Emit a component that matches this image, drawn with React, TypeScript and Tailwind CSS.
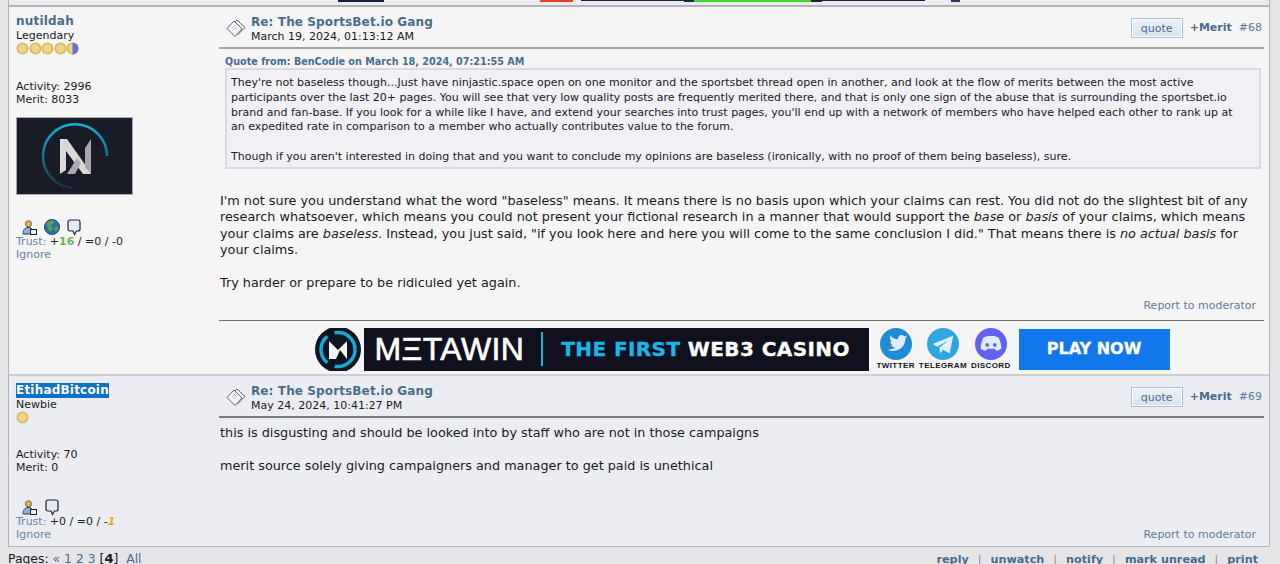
const font = "font-['DejaVu_Sans','Liberation_Sans',sans-serif]";

function Coin({ half }: { half?: boolean }) {
  return (
    <svg width="13" height="13" viewBox="0 0 13 13" className="-mr-[0.5px]">
      <circle cx="6.500" cy="6.500" r="6" fill="#d9b962" />
      <circle cx="6.500" cy="6.500" r="4.200" fill="#f0d688" />
      {half && <path d="M6.500.5a6 6 0 0 1 0 12z" fill="#6a6fd0" />}
    </svg>
  );
}

function PersonIcon() {
  return (
    <svg width="15" height="15" viewBox="0 0 15 15">
      <circle cx="6.500" cy="3.800" r="3" fill="#e8b93c" stroke="#444" strokeWidth=".8" />
      <path d="M1 14c0-4 2-6.500 5-6.500s4 1 5 3v3.500z" fill="#8fb0d8" stroke="#2c3e5c" strokeWidth="1" />
      <rect x="8.500" y="9.500" width="6" height="5" fill="#eee" stroke="#222" strokeWidth="1" />
    </svg>
  );
}

function GlobeIcon() {
  return (
    <svg width="16" height="16" viewBox="0 0 16 16">
      <circle cx="8" cy="8" r="7.600" fill="#2a6da8" stroke="#173d5e" strokeWidth=".8" />
      <path d="M3 4c2-2 5-3 7-2 1 1-1 3-2 3s-1 2 0 3 1 3-1 4-3-2-3-3-2-2-1-5zM11 8l3-1c1 3-1 5-2 6-1-1-2-3-1-5z" fill="#5aa34a" />
    </svg>
  );
}

function BubbleIcon() {
  return (
    <svg width="14" height="17" viewBox="0 0 14 17">
      <path d="M3 1h8a2 2 0 0 1 2 2v7a2 2 0 0 1-2 2H9.500L7.500 15.500 6 12H3a2 2 0 0 1-2-2V3a2 2 0 0 1 2-2z" fill="#e4ebf5" stroke="#1d2430" strokeWidth="1.200" />
    </svg>
  );
}

function TopicIcon() {
  return (
    <svg width="20" height="19" viewBox="0 0 20 19" fill="#f4f5f8" stroke="#62656c" strokeWidth="1" className="shrink-0">
      <path d="M11 1l8 7.500-7 7-8-7.500z" />
      <path d="M8 2l8 8-7 7.500-8-8z" />
      <path d="M6 9l3-3M7.500 11l3-3" stroke="#aeb2ba" />
    </svg>
  );
}

function QuoteButton() {
  return (
    <span className="flex h-[20px] w-[52px] items-center justify-center border border-[#a9c0dc] bg-gradient-to-b from-[#f0f3f8] to-[#d9e1ec] text-[11px] leading-none text-[#476c8e] shadow-[inset_0_0_0_1px_#fff]">
      quote
    </span>
  );
}

function Sidebar({ name, rank, coins, half, activity, merit, selected, icons, trust, avatar }: {
  name: string; rank: string; coins: number; half?: boolean; activity: number; merit: number;
  selected?: boolean; icons: React.ReactNode; trust: React.ReactNode; avatar?: boolean;
}) {
  return (
    <div className="flex w-[210px] shrink-0 flex-col pl-[7px] pt-[7px] text-[11px] leading-[13px] text-[#1a1a22]">
      <b className={`self-start text-[12px] leading-[15px] tracking-[0.2px] ${selected ? "bg-[#0f70c8] text-white" : "text-[#476c8e]"}`}>{name}</b>
      <span>{rank}</span>
      <div className="flex h-[13px]">
        {Array.from({ length: coins }).map((_, i) => <Coin key={i} />)}
        {half && <Coin half />}
      </div>
      <div className={selected ? "mt-[24px]" : "mt-[25px]"}>Activity: {activity}</div>
      <div>Merit: {merit}</div>
      {avatar && (
        <div className="mt-[11px] flex h-[78px] w-[117px] items-center justify-center border border-[#a8a8ae] bg-[#191c27]">
          <svg width="72" height="72" viewBox="0 0 72 72">
            <defs>
              <linearGradient id="ring" x1="0" y1="0" x2="0" y2="1">
                <stop offset="0" stopColor="#14b4dc" />
                <stop offset="1" stopColor="#14b4dc" stopOpacity=".15" />
              </linearGradient>
            </defs>
            <path d="M68 36A32 32 0 1 0 33 68" fill="none" stroke="url(#ring)" strokeWidth="2.500" />
            <path d="M21 19h7l17 24 7 11h-8L27 31v19l-6 4z" fill="#d9d9db" />
            <path d="M52 19v35l-6-7V28zM28 54l10-16 4 5-6 11z" fill="#a9a9ad" />
          </svg>
        </div>
      )}
      <div className={`${avatar ? "mt-[24px]" : "mt-[25px]"} flex h-[16px] items-center pl-[6px] ${avatar ? "gap-[7px]" : "gap-[8px]"}`}>{icons}</div>
      <div><span className="text-[#6a84a6]">Trust: </span>{trust}</div>
      <div className="text-[#6a84a6]">Ignore</div>
    </div>
  );
}

function PostHead({ date, no, dark }: { date: string; no: number; dark?: boolean }) {
  return (
    <div className={`flex h-[42px] items-center border-b-2 pl-[7px] pt-[2px] ${dark ? "border-[#7c7c80]" : "border-[#a2a2a4]"}`}>
      <TopicIcon />
      <div className="ml-[5px] flex-1 pt-[1px]">
        <div className="text-[12px] font-bold leading-[15px] tracking-[0.12px] text-[#476c8e]">Re: The SportsBet.io Gang</div>
        <div className="text-[11px] leading-[13px] text-[#1a1a22]">{date}</div>
      </div>
      <div className="flex items-center gap-[7px] pr-[2px] text-[11px]">
        <QuoteButton />
        <b className="text-[#476c8e]">+Merit</b>
        <span className="text-[#5d7c9c]">#{no}</span>
      </div>
    </div>
  );
}

function Social({ color, label, shape }: { color: string; label: string; shape: string }) {
  return (
    <div className="flex flex-col items-center">
      <svg width="32" height="32" viewBox="0 0 34 34">
        <circle cx="17" cy="17" r="17" fill={color} />
        <path d={shape} fill="#dfeefa" />
      </svg>
      <span className="mt-[1px] whitespace-nowrap font-['Liberation_Sans',sans-serif] text-[8px] font-bold leading-[10px] tracking-[0.4px] text-[#15151f]">{label}</span>
    </div>
  );
}

function Banner() {
  return (
    <div className="flex h-[43px] items-center justify-center">
      <svg width="48" height="43" viewBox="0 0 48 43" className="mr-[2px]">
        <circle cx="24" cy="21.500" r="23" fill="#101522" />
        <circle cx="24" cy="21.500" r="17" fill="none" stroke="#15a9d8" strokeWidth="3.500" strokeDasharray="30 8" />
        <path d="M15 31V13l9 9 9-9v18l-7-9-4 9z" fill="#f4f4f4" />
      </svg>
      <div className="flex h-[43px] w-[505px] items-center whitespace-nowrap bg-[#10101f] pl-[11px] text-white">
        <span className="font-['Liberation_Sans',sans-serif] text-[32px] leading-none tracking-[0.4px] [-webkit-text-stroke:0.6px_white]">MΞTAWIN</span>
        <span className="ml-[17px] h-[34px] w-[2px] bg-[#15b5e0]" />
        <span className="ml-[18px] text-[20px] font-bold leading-none tracking-[0.4px] [-webkit-text-stroke:0.3px]">
          <span className="text-[#16b8ea]">THE FIRST</span> WEB3 CASINO
        </span>
      </div>
      <div className="flex h-[43px] w-[150px] items-start gap-[4px] pl-[8px]">
        <Social color="#1f8bd6" label="TWITTER" shape="M8 23c9 4 19-1 19-12l2-3-3 1c-2-3-7-2-7 3-4 0-6-2-8-4-1 3 0 5 2 7l-2-1c0 2 1 4 3 4h-2c1 2 2 2 4 3-2 1-4 2-8 2z" />
        <Social color="#2ea6e4" label="TELEGRAM" shape="M6 17L28 8l-4 19-7-4-3 4-1-6 10-8-12 7z" />
        <Social color="#6163f0" label="DISCORD" shape="M9 10c5-2 11-2 16 0 2 4 3 8 3 12-3 2-5 2-6 2l-1-2H13l-1 2c-1 0-3 0-6-2 0-4 1-8 3-12zm4 6a2 2 0 1 0 0 4 2 2 0 0 0 0-4zm8 0a2 2 0 1 0 0 4 2 2 0 0 0 0-4z" />
      </div>
      <div className="flex h-[41px] w-[151px] items-center justify-center bg-[#1277ea] text-[16px] font-bold text-white [-webkit-text-stroke:0.3px_white]">
        PLAY NOW
      </div>
    </div>
  );
}

export default function App() {
  return (
    <div className={`${font} h-[564px] w-[1280px] overflow-hidden bg-[#e5e5e8]`}>
      <div className="mx-[8px] w-[1262px] border-x border-b border-[#b4b4b6]">
        {/* bottom edge of the previous banner */}
        <div className="flex h-[7px] items-start border-b-2 border-[#b4b4b6] bg-[#ebecf1]">
          <span className="ml-[329px] h-[2px] w-[46px] bg-[#182238]" />
          <span className="ml-[156px] h-[2px] w-[33px] bg-[#e5421f]" />
          <span className="ml-[8px] h-[1px] w-[103px] bg-[#182238]" />
          <span className="h-[2px] w-[10px] bg-[#182238]" />
          <span className="h-[2px] w-[117px] bg-[#3cd52e]" />
          <span className="h-[2px] w-[11px] bg-[#182238]" />
          <span className="h-[1px] w-[103px] bg-[#182238]" />
          <span className="ml-[26px] h-[2px] w-[9px] bg-[#31365a]" />
        </div>

        <div className="flex h-[367px] bg-[#f5f5f6]">
          <Sidebar
            name="nutildah" rank="Legendary" coins={4} half activity={2996} merit={8033} avatar
            icons={<><PersonIcon /><GlobeIcon /><BubbleIcon /></>}
            trust={<>+<b className="text-[#6cb457]">16</b> / =0 / -0</>}
          />
          <div className="min-w-0 flex-1 pr-[5px]">
            <PostHead date="March 19, 2024, 01:13:12 AM" no={68} />
            <div className="pl-[6px] pt-[6px]">
              <div className="text-[9.650px] font-bold leading-[13px] text-[#476c8e]">Quote from: BenCodie on March 18, 2024, 07:21:55 AM</div>
              <div className="mr-[3px] border-2 border-[#d9dae8] bg-[#f0f0f5] pb-[2px] pl-[4px] pr-[12px] pt-[6px] text-[11px] leading-[14.800px] text-[#1a1a22]">
                They're not baseless though...Just have ninjastic.space open on one monitor and the sportsbet thread open in another, and look at the flow of merits between the most active participants over the last 20+ pages. You will see that very low quality posts are frequently merited there, and that is only one sign of the abuse that is surrounding the sportsbet.io brand and fan-base. If you look for a while like I have, and extend your searches into trust pages, you'll end up with a network of members who have helped each other to rank up at an expedited rate in comparison to a member who actually contributes value to the forum.
                <br /><br />
                Though if you aren't interested in doing that and you want to conclude my opinions are baseless (ironically, with no proof of them being baseless), sure.
              </div>
            </div>
            <div className="pl-[1px] pt-[24px] text-[12.800px] leading-[16.500px] text-[#1a1a22]">
              I'm not sure you understand what the word "baseless" means. It means there is no basis upon which your claims can rest. You did not do the slightest bit of any research whatsoever, which means you could not present your fictional research in a manner that would support the <i>base</i> or <i>basis</i> of your claims, which means your claims are <i>baseless</i>. Instead, you just said, "if you look here and here you will come to the same conclusion I did." That means there is <i>no actual basis</i> for your claims.
              <br /><br />
              Try harder or prepare to be ridiculed yet again.
            </div>
            <div className="flex justify-end pr-[8px] pt-[7px] text-[11px] leading-[13px] text-[#5d7c9c]">Report to moderator</div>
            <div className="mt-[8px] border-t border-[#6f6f72] pt-[7px]">
              <Banner />
            </div>
          </div>
        </div>

        <div className="flex h-[172px] border-t-2 border-[#cfcfd2] bg-[#ecedf2]">
          <Sidebar
            name="EtihadBitcoin" rank="Newbie" coins={1} activity={70} merit={0} selected
            icons={<><PersonIcon /><BubbleIcon /></>}
            trust={<>+0 / =0 / -<b className="italic text-[#f5a210]">1</b></>}
          />
          <div className="flex min-w-0 flex-1 flex-col pr-[5px]">
            <PostHead date="May 24, 2024, 10:41:27 PM" no={69} dark />
            <div className="pl-[1px] pt-[7px] text-[12.800px] leading-[16.500px] text-[#1a1a22]">
              this is disgusting and should be looked into by staff who are not in those campaigns
              <br /><br />
              merit source solely giving campaigners and manager to get paid is unethical
            </div>
            <div className="mt-auto flex justify-end pb-[5px] pr-[8px] text-[11px] leading-[13px] text-[#5d7c9c]">Report to moderator</div>
          </div>
        </div>
      </div>

      <div className="mx-[8px] flex w-[1262px] items-baseline justify-between pt-[5px] text-[12.400px] leading-[14px] text-[#1a1a22]">
        <div>
          Pages: <span className="text-[#476c8e]">« 1 2 3</span> [<b className="text-[13px]">4</b>]&nbsp; <span className="text-[#476c8e]">All</span>
        </div>
        <div className="flex gap-[9px] pr-[12px] text-[11.200px] font-bold text-[#476c8e]">
          <span>reply</span><span className="font-normal text-[#8a8a8e]">|</span>
          <span>unwatch</span><span className="font-normal text-[#8a8a8e]">|</span>
          <span>notify</span><span className="font-normal text-[#8a8a8e]">|</span>
          <span>mark unread</span><span className="font-normal text-[#8a8a8e]">|</span>
          <span>print</span>
        </div>
      </div>
    </div>
  );
}
